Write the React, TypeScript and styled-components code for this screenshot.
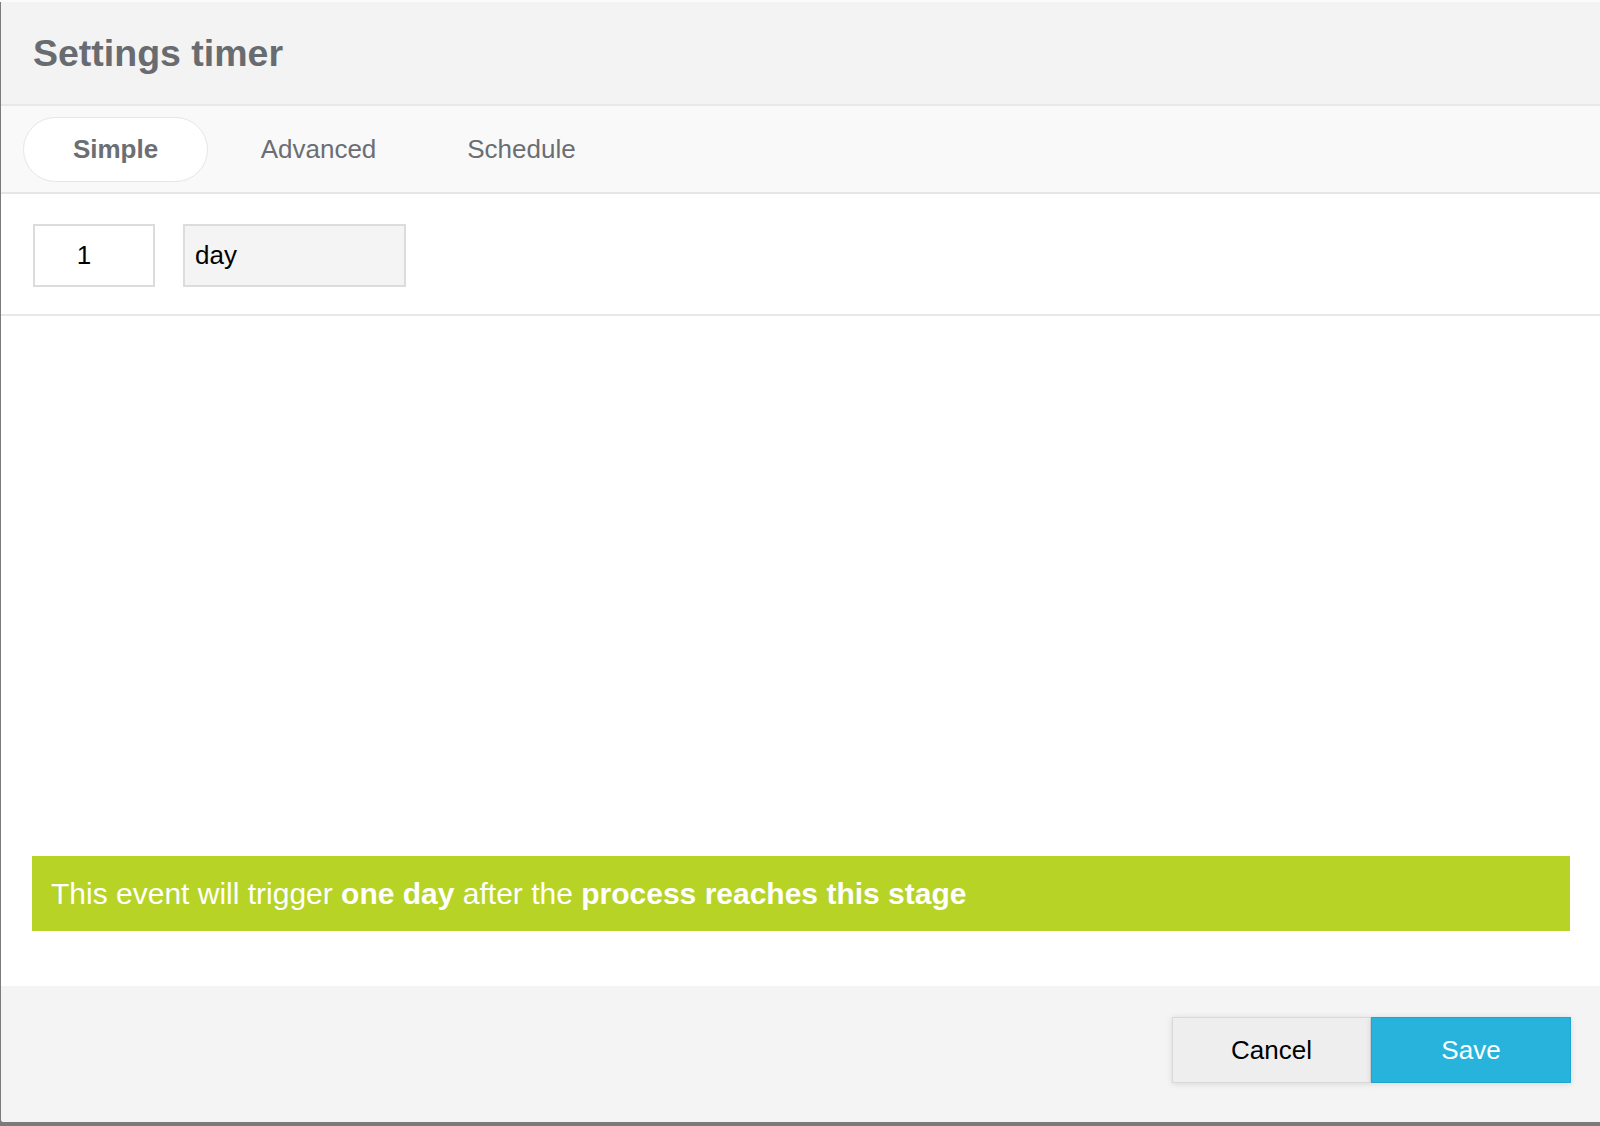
import React from 'react'
import styled, { createGlobalStyle } from 'styled-components'

const GlobalStyle = createGlobalStyle`
  html, body {
    margin: 0;
    padding: 0;
    height: 100%;
  }
  body {
    font-family: 'Liberation Sans', Arial, Helvetica, sans-serif;
    background: #7b7b7b;
  }
  #root {
    height: 100%;
  }
`

const tabs = ['Simple', 'Advanced', 'Schedule']

function App() {
  const active = 'Simple'

  return (
    <>
      <GlobalStyle />
      <Backdrop>
        <Dialog>
          <Header>
            <Title>Settings timer</Title>
          </Header>
          <TabBar>
            {tabs.map((tab) => (
              <Tab key={tab} $active={tab === active}>
                {tab}
              </Tab>
            ))}
          </TabBar>
          <FieldRow>
            <AmountInput defaultValue='1' />
            <UnitSelect>day</UnitSelect>
          </FieldRow>
          <Body>
            <Notice>
              This event will trigger <b>one day</b> after the <b>process reaches this stage</b>
            </Notice>
          </Body>
          <Footer>
            <Button>Cancel</Button>
            <Button $primary>Save</Button>
          </Footer>
        </Dialog>
      </Backdrop>
    </>
  )
}
export default App

const Backdrop = styled.div`
  height: 100%;
  box-sizing: border-box;
  padding: 0 0 4px 1px;
  background: linear-gradient(to bottom, #fafafa 0, #fafafa 2px, #7b7b7b 2px);
`

const Dialog = styled.div`
  height: 100%;
  display: flex;
  flex-direction: column;
  background: #fff;
  border-top: 2px solid #fafafa;
  border-bottom-left-radius: 3px;
  overflow: hidden;
  box-sizing: border-box;
`

const Header = styled.div`
  height: 102px;
  flex: none;
  display: flex;
  align-items: center;
  padding-left: 32px;
  background: #f3f3f3;
  border-bottom: 2px solid #e8e8e8;
`

const Title = styled.h1`
  margin: 0;
  font-size: 37.5px;
  font-weight: bold;
  color: #686b70;
`

const TabBar = styled.div`
  height: 86px;
  flex: none;
  display: flex;
  align-items: center;
  gap: 18px;
  padding-left: 22px;
  background: #f9f9f9;
  border-bottom: 2px solid #e6e6e6;
`

const Tab = styled.div<{ $active?: boolean }>`
  width: 185px;
  height: 65px;
  box-sizing: border-box;
  display: flex;
  align-items: center;
  justify-content: center;
  border-radius: 33px;
  font-size: 26px;
  color: #6b6e73;
  font-weight: ${(p) => (p.$active ? 'bold' : 'normal')};
  background: ${(p) => (p.$active ? '#fff' : 'transparent')};
  border: 1.5px solid ${(p) => (p.$active ? '#e6e6e6' : 'transparent')};
`

const FieldRow = styled.div`
  height: 122px;
  flex: none;
  display: flex;
  align-items: flex-start;
  gap: 28px;
  padding: 30px 32px 0;
  border-bottom: 2px solid #e8e8e8;
  box-sizing: border-box;
`

const AmountInput = styled.input`
  width: 122px;
  height: 63px;
  box-sizing: border-box;
  border: 2px solid #dcdcdc;
  background: #fff;
  font-family: inherit;
  font-size: 26px;
  color: #000;
  text-align: center;
  padding: 0 20px 0 0;
  margin: 0;
  outline: none;
`

const UnitSelect = styled.div`
  width: 223px;
  height: 63px;
  box-sizing: border-box;
  border: 2px solid #dcdcdc;
  background: #f4f4f4;
  display: flex;
  align-items: center;
  padding-left: 10px;
  font-size: 26px;
  color: #000;
`

const Body = styled.div`
  flex: 1;
  display: flex;
  flex-direction: column;
  justify-content: flex-end;
  padding: 0 30px 55px 31px;
`

const Notice = styled.div`
  height: 75px;
  line-height: 75px;
  padding-left: 19px;
  background: #b6d326;
  color: #fff;
  font-size: 30px;
  white-space: nowrap;

  b {
    font-weight: bold;
  }
`

const Footer = styled.div`
  height: 136px;
  flex: none;
  box-sizing: border-box;
  display: flex;
  align-items: flex-start;
  justify-content: flex-end;
  padding: 31px 29px 0 0;
  background: #f4f4f4;
`

const Button = styled.button<{ $primary?: boolean }>`
  width: ${(p) => (p.$primary ? '200px' : '199px')};
  height: 66px;
  box-sizing: border-box;
  margin: 0;
  font-family: inherit;
  font-size: 26px;
  cursor: pointer;
  color: ${(p) => (p.$primary ? '#fff' : '#000')};
  background: ${(p) => (p.$primary ? '#27b3db' : '#eeeeee')};
  border: 1.5px solid ${(p) => (p.$primary ? '#1fa5cf' : '#d9d9d9')};
  box-shadow: 0 1px 6px rgba(0, 0, 0, 0.12);
`
